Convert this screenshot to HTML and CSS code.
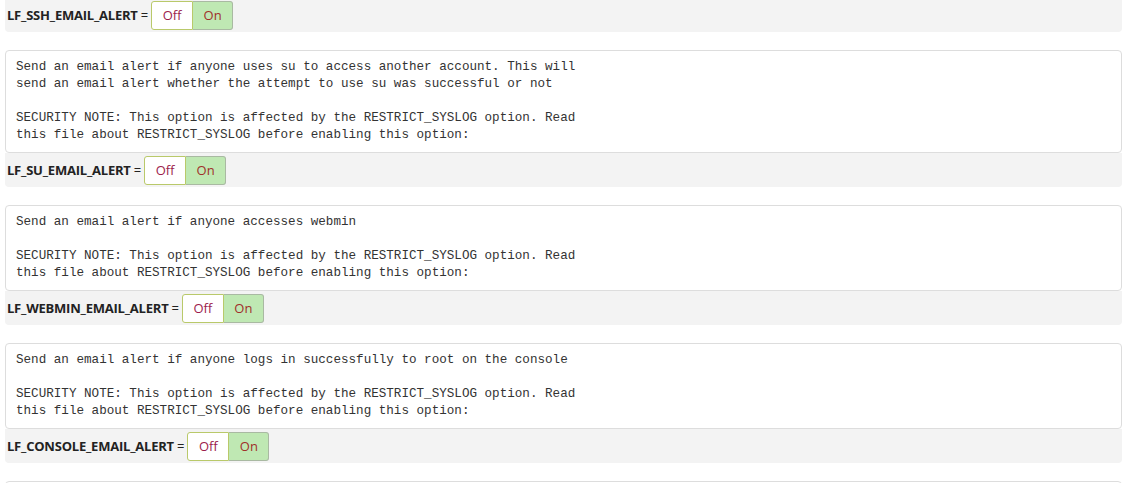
FILE: index.html
```html
<!DOCTYPE html>
<html>
<head>
<meta charset="utf-8">
<link rel="stylesheet" href="styles.css">
</head>
<body>
<div class="page">
  <div class="bar">
    <span class="label">LF_SSH_EMAIL_ALERT</span><span class="eq">=</span>
    <div class="toggle"><span class="off">Off</span><span class="on">On</span></div>
  </div>

  <div class="item">
    <pre class="desc">Send an email alert if anyone uses su to access another account. This will
send an email alert whether the attempt to use su was successful or not

SECURITY NOTE: This option is affected by the RESTRICT_SYSLOG option. Read
this file about RESTRICT_SYSLOG before enabling this option:</pre>
    <div class="bar">
      <span class="label">LF_SU_EMAIL_ALERT</span><span class="eq">=</span>
      <div class="toggle"><span class="off">Off</span><span class="on">On</span></div>
    </div>
  </div>

  <div class="item">
    <pre class="desc">Send an email alert if anyone accesses webmin

SECURITY NOTE: This option is affected by the RESTRICT_SYSLOG option. Read
this file about RESTRICT_SYSLOG before enabling this option:</pre>
    <div class="bar">
      <span class="label">LF_WEBMIN_EMAIL_ALERT</span><span class="eq">=</span>
      <div class="toggle"><span class="off">Off</span><span class="on">On</span></div>
    </div>
  </div>

  <div class="item">
    <pre class="desc">Send an email alert if anyone logs in successfully to root on the console

SECURITY NOTE: This option is affected by the RESTRICT_SYSLOG option. Read
this file about RESTRICT_SYSLOG before enabling this option:</pre>
    <div class="bar">
      <span class="label">LF_CONSOLE_EMAIL_ALERT</span><span class="eq">=</span>
      <div class="toggle"><span class="off">Off</span><span class="on">On</span></div>
    </div>
  </div>

  <div class="item">
    <pre class="desc">&nbsp;</pre>
  </div>
</div>
</body>
</html>
```

FILE: styles.css
```css
html, body {
  margin: 0;
  padding: 0;
  background: #ffffff;
  overflow: hidden;
}

.page {
  margin-top: -2px;
  padding: 0 13px 0 5px;
  font-family: "Open Sans", "Liberation Sans", sans-serif;
}

.item {
  margin-top: 18px;
}

.desc {
  margin: 0;
  padding: 8px 10px;
  border: 1px solid #dddddd;
  border-radius: 4px;
  background: #ffffff;
  font-family: "Liberation Mono", "Courier New", monospace;
  font-size: 12.6px;
  line-height: 17px;
  color: #333333;
  white-space: pre;
}

.bar {
  display: flex;
  align-items: center;
  height: 34px;
  padding: 0 2px;
  background: #f3f3f3;
  border-radius: 0 0 4px 4px;
}

.label {
  font-size: 13px;
  font-weight: 700;
  letter-spacing: -0.22px;
  color: #222222;
}

.eq {
  font-size: 13px;
  color: #222222;
  margin-left: 3px;
  margin-right: 3px;
}

.toggle {
  display: flex;
  height: 29px;
  font-size: 13px;
}

.toggle span {
  display: flex;
  align-items: center;
  justify-content: center;
  box-sizing: border-box;
}

.off {
  width: 42px;
  background: #ffffff;
  border: 1px solid #b9c96a;
  border-radius: 3px 0 0 3px;
  color: #9c1c4c;
}

.on {
  width: 40px;
  background: #bfe8b3;
  border: 1px solid #a9b9a2;
  border-left: none;
  border-radius: 0 3px 3px 0;
  color: #a0302a;
}
```
